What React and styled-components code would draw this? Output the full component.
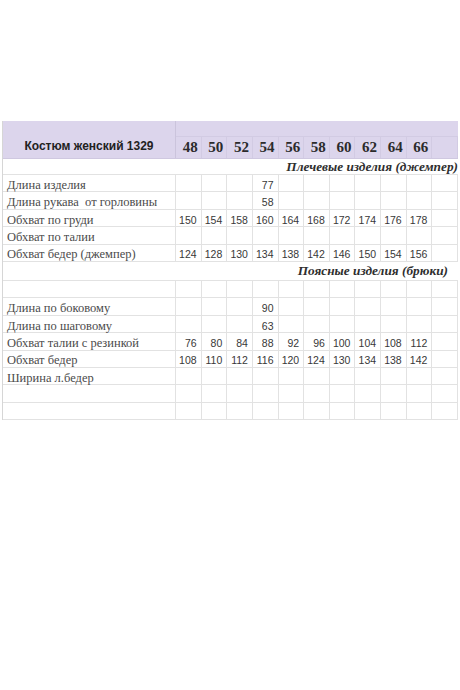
import React from 'react'
import styled, { createGlobalStyle } from 'styled-components'

const Global = createGlobalStyle`
  body {
    margin: 0;
    background: #fff;
    font-family: "Liberation Serif", serif;
  }
`

const Page = styled.div`
  width: 460px;
  height: 690px;
  padding: 121px 0 0 2px;
  box-sizing: border-box;
`

const Sheet = styled.div`
  width: 455px;
  border-left: 1px solid #d6d6d6;
`

const Header = styled.div`
  display: grid;
  grid-template-columns: 173px 1fr;
  height: 37px;
  background: #dcd5ec;
  border-bottom: 1px solid #cfc8e0;
`

const Title = styled.div`
  display: flex;
  align-items: flex-end;
  justify-content: center;
  padding-bottom: 5px;
  border-right: 1px solid #cbc4dc;
  font-family: "Liberation Sans", Arial, sans-serif;
  font-weight: bold;
  font-size: 12px;
  color: #222;
`

const SizesBlock = styled.div`
  display: flex;
  flex-direction: column;
`

const Band = styled.div`
  height: 15px;
  border-bottom: 1px solid #d2cbe3;
`

const SizeRow = styled.div`
  flex: 1;
  display: grid;
  grid-template-columns: repeat(11, 1fr);
`

const SizeCell = styled.div`
  display: flex;
  align-items: center;
  justify-content: flex-end;
  padding: 0 3px 1px 0;
  border-right: 1px solid #d2cbe3;
  font-weight: bold;
  font-size: 15px;
  color: #2b2b2b;
`

const Row = styled.div`
  display: grid;
  grid-template-columns: 173px repeat(11, 1fr);
  height: ${p => p.$h}px;
  box-sizing: border-box;
  border-bottom: 1px solid #e2e2e2;
`

const Label = styled.div`
  display: flex;
  align-items: flex-end;
  padding: 0 0 0 4px;
  line-height: 1;
  border-right: 1px solid #e2e2e2;
  font-size: 12.5px;
  color: #4b4b4b;
  white-space: pre;
`

const Num = styled.div`
  display: flex;
  align-items: flex-end;
  justify-content: flex-end;
  padding: 0 4px 1px 0;
  line-height: 1;
  border-right: 1px solid #e2e2e2;
  font-family: "Liberation Sans", Arial, sans-serif;
  font-size: 10.5px;
  color: #383838;
`

const Section = styled.div`
  height: ${p => p.$h}px;
  box-sizing: border-box;
  border-bottom: 1px solid #e2e2e2;
  display: flex;
  align-items: flex-end;
  justify-content: flex-end;
  padding: 0 ${p => p.$pr}px ${p => p.$pb}px 0;
  line-height: 1;
  font-weight: bold;
  font-style: italic;
  font-size: 13.3px;
  color: #2e2e2e;
  white-space: nowrap;
`

const sizes = [48, 50, 52, 54, 56, 58, 60, 62, 64, 66, '']

const top = [
  ['Длина изделия', { 3: 77 }],
  ['Длина рукава  от горловины', { 3: 58 }],
  ['Обхват по груди', [150, 154, 158, 160, 164, 168, 172, 174, 176, 178]],
  ['Обхват по талии', {}],
  ['Обхват бедер (джемпер)', [124, 128, 130, 134, 138, 142, 146, 150, 154, 156]],
]

const bottom = [
  ['', {}],
  ['Длина по боковому', { 3: 90 }],
  ['Длина по шаговому', { 3: 63 }],
  ['Обхват талии с резинкой', [76, 80, 84, 88, 92, 96, 100, 104, 108, 112]],
  ['Обхват бедер', [108, 110, 112, 116, 120, 124, 130, 134, 138, 142]],
  ['Ширина л.бедер', {}],
  ['', {}],
  ['', {}],
]

const DataRow = ({ label, values }) => (
  <Row $h={17.4}>
    <Label>{label}</Label>
    {Array.from({ length: 11 }, (_, i) => (
      <Num key={i}>{values[i] ?? ''}</Num>
    ))}
  </Row>
)

export default function App() {
  return (
    <Page>
      <Global />
      <Sheet>
        <Header>
          <Title>Костюм женский 1329</Title>
          <SizesBlock>
            <Band />
            <SizeRow>
              {sizes.map((s, i) => <SizeCell key={i}>{s}</SizeCell>)}
            </SizeRow>
          </SizesBlock>
        </Header>
        <Section $h={16} $pr={0} $pb={1}>Плечевые изделия (джемпер)</Section>
        {top.map(([l, v], i) => <DataRow key={i} label={l} values={v} />)}
        <Section $h={19} $pr={10} $pb={3}>Поясные изделия (брюки)</Section>
        {bottom.map(([l, v], i) => <DataRow key={i} label={l} values={v} />)}
      </Sheet>
    </Page>
  )
}
